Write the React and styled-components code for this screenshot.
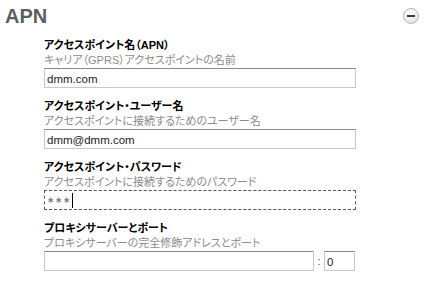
import React from "react";
import styled, { createGlobalStyle } from "styled-components";

const Global = createGlobalStyle`
  body {
    margin: 0;
    background: #fff;
    font-family: "Liberation Sans", "Noto Sans CJK JP", sans-serif;
  }
`;

const Panel = styled.div`
  width: 434px;
  height: 283px;
  overflow: hidden;
`;

const Header = styled.div`
  display: flex;
  align-items: flex-start;
  justify-content: space-between;
  padding: 5px 15px 0 5px;
  height: 33px;
  box-sizing: border-box;
`;

const Title = styled.h2`
  margin: 0;
  font: bold 20px/23px "Liberation Sans", sans-serif;
  color: #595e63;
`;

const Toggle = styled.div`
  width: 14px;
  height: 14px;
  margin-top: 3px;
  border-radius: 50%;
  border: 1px solid #b8b8b8;
  background: radial-gradient(circle at 45% 35%, #ffffff 0%, #f0f0f0 50%, #d4d4d4 100%);
  display: flex;
  align-items: center;
  justify-content: center;
  &::after {
    content: "";
    width: 8px;
    height: 2px;
    background: #3a3a3a;
  }
`;

const Fields = styled.div`
  padding: 5px 0 0 44px;
  display: flex;
  flex-direction: column;
  gap: 11px;
`;

const Field = styled.div`
  display: flex;
  flex-direction: column;
  width: 312px;
`;

const Label = styled.div`
  font: bold 11px/15px "Liberation Sans", "Noto Sans CJK JP", sans-serif;
  font-feature-settings: "palt";
  color: #000;
`;

const Hint = styled.div`
  font: 11px/14px "Liberation Sans", "Noto Sans CJK JP", sans-serif;
  font-feature-settings: "palt";
  color: #8c8c8c;
  margin-bottom: 1px;
`;

const Input = styled.input`
  box-sizing: border-box;
  width: ${(p) => p.$w || "100%"};
  height: 20px;
  margin: 0;
  padding: 1px 2px 0;
  border: 1px solid #c8c8c8;
  border-top-color: #8a8a8a;
  font: 11.5px "Liberation Sans", sans-serif;
  color: #222;
  outline: none;
  background: #fff;
`;

const FocusBox = styled.div`
  box-sizing: border-box;
  height: 20px;
  border: 1px dashed #555;
  padding: 0 2px;
  display: flex;
  align-items: center;
  font: 9px "DejaVu Sans", sans-serif;
  color: #666;
  letter-spacing: 0.5px;
`;

const Caret = styled.span`
  display: inline-block;
  width: 1px;
  height: 15px;
  background: #000;
  margin-left: 1px;
`;

const Row = styled.div`
  display: flex;
  align-items: center;
`;

const Sep = styled.span`
  width: 10px;
  text-align: center;
  font: 11px "Liberation Sans", sans-serif;
  color: #555;
`;

export default function App() {
  return (
    <Panel>
      <Global />
      <Header>
        <Title>APN</Title>
        <Toggle />
      </Header>
      <Fields>
        <Field>
          <Label>アクセスポイント名（APN）</Label>
          <Hint>キャリア（GPRS）アクセスポイントの名前</Hint>
          <Input readOnly defaultValue="dmm.com" />
        </Field>
        <Field>
          <Label>アクセスポイント・ユーザー名</Label>
          <Hint>アクセスポイントに接続するためのユーザー名</Hint>
          <Input readOnly defaultValue="dmm@dmm.com" />
        </Field>
        <Field>
          <Label>アクセスポイント・パスワード</Label>
          <Hint>アクセスポイントに接続するためのパスワード</Hint>
          <FocusBox>
            ∗∗∗
            <Caret />
          </FocusBox>
        </Field>
        <Field>
          <Label>プロキシサーバーとポート</Label>
          <Hint>プロキシサーバーの完全修飾アドレスとポート</Hint>
          <Row>
            <Input readOnly defaultValue="" $w="270px" />
            <Sep>:</Sep>
            <Input readOnly defaultValue="0" $w="31px" />
          </Row>
        </Field>
      </Fields>
    </Panel>
  );
}
